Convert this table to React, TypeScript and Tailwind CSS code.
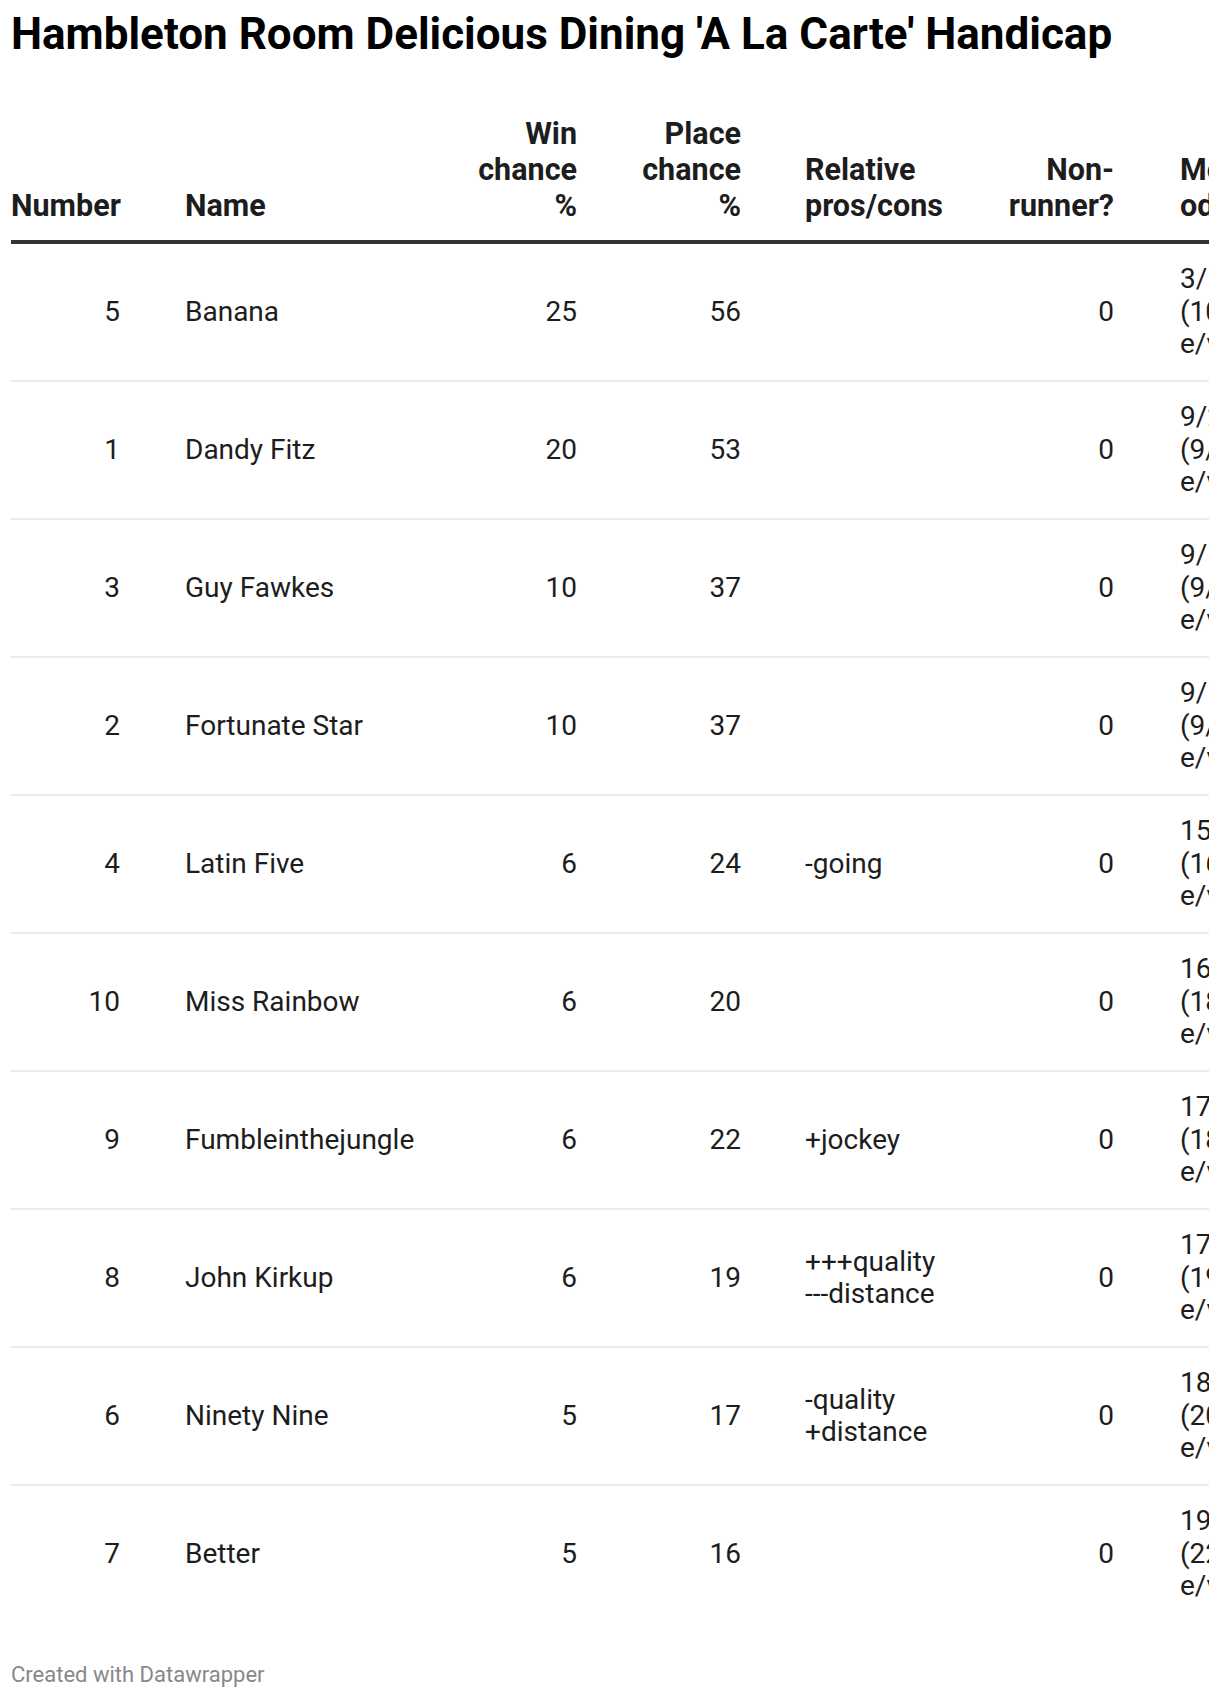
const rows = [
  { num: 5, name: 'Banana', win: 25, place: 56, rel: '', nr: 0, odds: '3/1 (10/3 e/v)' },
  { num: 1, name: 'Dandy Fitz', win: 20, place: 53, rel: '', nr: 0, odds: '9/2 (9/2 e/v)' },
  { num: 3, name: 'Guy Fawkes', win: 10, place: 37, rel: '', nr: 0, odds: '9/1 (9/1 e/v)' },
  { num: 2, name: 'Fortunate Star', win: 10, place: 37, rel: '', nr: 0, odds: '9/1 (9/1 e/v)' },
  { num: 4, name: 'Latin Five', win: 6, place: 24, rel: '-going', nr: 0, odds: '15/1 (16/1 e/v)' },
  { num: 10, name: 'Miss Rainbow', win: 6, place: 20, rel: '', nr: 0, odds: '16/1 (18/1 e/v)' },
  { num: 9, name: 'Fumbleinthejungle', win: 6, place: 22, rel: '+jockey', nr: 0, odds: '17/1 (18/1 e/v)' },
  { num: 8, name: 'John Kirkup', win: 6, place: 19, rel: '+++quality\n---distance', nr: 0, odds: '17/1 (19/1 e/v)' },
  { num: 6, name: 'Ninety Nine', win: 5, place: 17, rel: '-quality\n+distance', nr: 0, odds: '18/1 (20/1 e/v)' },
  { num: 7, name: 'Better', win: 5, place: 16, rel: '', nr: 0, odds: '19/1 (22/1 e/v)' },
]

const cols = 'grid grid-cols-[109px_320px_137px_164px_259px_114px_146px]'

export default function App() {
  return (
    <div className="min-h-[1698px] bg-white px-[11px] pt-[8px] font-['Roboto',sans-serif] text-[#1d1d1d]">
      <h1 className="text-[44px] font-bold leading-[52px] text-black">
        Hambleton Room Delicious Dining 'A La Carte' Handicap
      </h1>

      <div className="mt-[56px] overflow-hidden">
        {/* Header */}
        <div className={`${cols} items-end border-b-4 border-[#333] pb-[16px] text-[30.5px] font-bold leading-[36px]`}>
          <div className="text-right">Number</div>
          <div className="pl-[65px]">Name</div>
          <div className="text-right">Win<br />chance<br />%</div>
          <div className="text-right">Place<br />chance<br />%</div>
          <div className="pl-[64px]">Relative<br />pros/cons</div>
          <div className="text-right">Non-<br />runner?</div>
          <div className="whitespace-nowrap pl-[66px]">Model<br />odds</div>
        </div>

        {/* Body */}
        {rows.map((r, i) => (
          <div
            key={r.name}
            className={`${cols} items-center py-[19.25px] text-[28px] leading-[32.5px] ${
              i < rows.length - 1 ? 'border-b-2 border-[#ececec]' : ''
            }`}
          >
            <div className="text-right">{r.num}</div>
            <div className="pl-[65px]">{r.name}</div>
            <div className="text-right">{r.win}</div>
            <div className="text-right">{r.place}</div>
            <div className="whitespace-pre-line pl-[64px]">{r.rel}</div>
            <div className="text-right">{r.nr}</div>
            <div className="pl-[66px]">
              <div className="w-[80px]">{r.odds}</div>
            </div>
          </div>
        ))}
      </div>

      <p className="mt-[41px] text-[22px] leading-[24px] text-[#888]">Created with Datawrapper</p>
    </div>
  )
}
